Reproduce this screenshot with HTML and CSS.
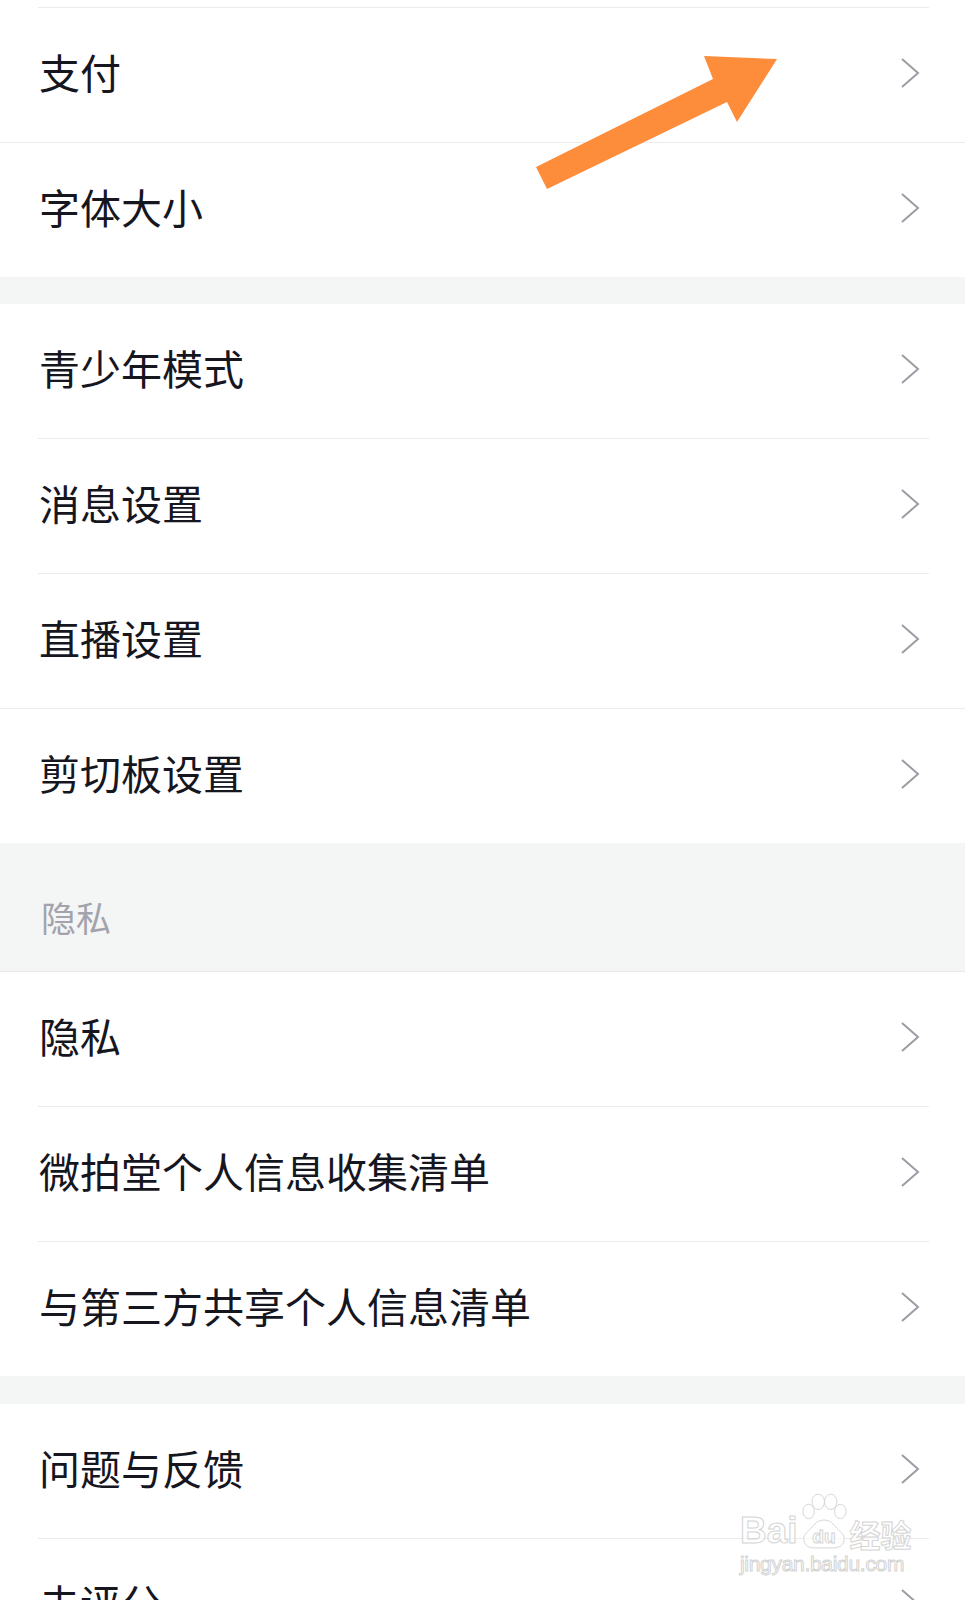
FILE: index.html
```html
<!DOCTYPE html>
<html lang="zh-CN">
<head>
  <meta charset="UTF-8" />
  <meta name="viewport" content="width=device-width, initial-scale=1.0"/>
  <title>设置</title>
  <link rel="stylesheet" href="styles.css">
</head>
<body>
  <div class="screen">
    <div class="stub"></div>

    <section class="group">
      <div class="row full"><span class="label">支付</span><svg class="chev" viewBox="0 0 20 32"><polyline points="2,2 18,16 2,30"/></svg></div>
      <div class="row"><span class="label">字体大小</span><svg class="chev" viewBox="0 0 20 32"><polyline points="2,2 18,16 2,30"/></svg></div>
    </section>

    <div class="gap"></div>

    <section class="group">
      <div class="row"><span class="label">青少年模式</span><svg class="chev" viewBox="0 0 20 32"><polyline points="2,2 18,16 2,30"/></svg></div>
      <div class="row"><span class="label">消息设置</span><svg class="chev" viewBox="0 0 20 32"><polyline points="2,2 18,16 2,30"/></svg></div>
      <div class="row full"><span class="label">直播设置</span><svg class="chev" viewBox="0 0 20 32"><polyline points="2,2 18,16 2,30"/></svg></div>
      <div class="row"><span class="label">剪切板设置</span><svg class="chev" viewBox="0 0 20 32"><polyline points="2,2 18,16 2,30"/></svg></div>
    </section>

    <div class="group-title">隐私</div>

    <section class="group">
      <div class="row"><span class="label">隐私</span><svg class="chev" viewBox="0 0 20 32"><polyline points="2,2 18,16 2,30"/></svg></div>
      <div class="row"><span class="label">微拍堂个人信息收集清单</span><svg class="chev" viewBox="0 0 20 32"><polyline points="2,2 18,16 2,30"/></svg></div>
      <div class="row"><span class="label">与第三方共享个人信息清单</span><svg class="chev" viewBox="0 0 20 32"><polyline points="2,2 18,16 2,30"/></svg></div>
    </section>

    <div class="gap gap-lg"></div>

    <section class="group">
      <div class="row"><span class="label">问题与反馈</span><svg class="chev" viewBox="0 0 20 32"><polyline points="2,2 18,16 2,30"/></svg></div>
      <div class="row"><span class="label">去评分</span><svg class="chev" viewBox="0 0 20 32"><polyline points="2,2 18,16 2,30"/></svg></div>
    </section>

    <!-- annotation arrow drawn over the list -->
    <svg class="arrow" viewBox="0 0 965 300">
      <polygon points="536,167 713,79 704,56 777,59 737,122 727,102 547,189"/>
    </svg>

    <!-- watermark -->
    <div class="wm">
      <div class="wm-logo">
        <span class="wm-bai">Bai</span>
        <svg class="paw" viewBox="0 0 50 58">
          <ellipse cx="9" cy="19" rx="6" ry="7.5"/>
          <ellipse cx="19" cy="9" rx="6.5" ry="8"/>
          <ellipse cx="32" cy="9" rx="6.5" ry="8"/>
          <ellipse cx="42" cy="19" rx="6" ry="7.5"/>
          <path d="M25 28 C16 28 13 36 7 41 C1 46 4 57 14 57 L36 57 C46 57 49 46 43 41 C37 36 34 28 25 28 Z"/>
          <text x="25" y="52" text-anchor="middle">du</text>
        </svg>
        <span class="wm-jy">经验</span>
      </div>
      <div class="wm-url">jingyan.baidu.com</div>
    </div>
  </div>
</body>
</html>
```

FILE: styles.css
```css
body {
  margin: 0;
  background: #fff;
  font-family: "Noto Sans CJK SC", "Noto Sans", sans-serif;
  color: #16161f;
}
.screen {
  position: relative;
  width: 965px;
  height: 1600px;
  overflow: hidden;
  background: #fff;
}
.stub {
  height: 8px;
  margin: 0 36px 0 38px;
  border-bottom: 1px solid #ebebeb;
  box-sizing: border-box;
}
.group { background: #fff; }
.row {
  height: 135px;
  margin: 0 36px 0 38px;
  padding: 0 9px 5px 1px;
  border-bottom: 1px solid #ebebeb;
  box-sizing: border-box;
  display: flex;
  align-items: center;
  justify-content: space-between;
}
.row.full {
  margin: 0;
  padding-left: 39px;
  padding-right: 45px;
}
.row:last-child {
  height: 134px;
  border-bottom: none;
}
.label {
  font-size: 41px;
  line-height: 1;
  margin-bottom: 2px;
}
.chev {
  width: 20px;
  height: 32px;
  fill: none;
  stroke: #9c9ca4;
  stroke-width: 2;
}
.gap {
  height: 27px;
  background: #f4f5f5;
}
.gap-lg { height: 28px; }
.group-title {
  height: 129px;
  padding: 18px 0 0 41px;
  box-sizing: border-box;
  background: #f4f5f5;
  border-bottom: 1px solid #e8e8e8;
  display: flex;
  align-items: center;
  font-size: 35px;
  color: #a3a3ab;
}
.arrow {
  position: absolute;
  left: 0;
  top: 0;
  width: 965px;
  height: 300px;
  fill: #fd8c3b;
}
.wm {
  position: absolute;
  left: 740px;
  top: 1492px;
  color: rgba(255,255,255,0.6);
  -webkit-text-stroke: 1px #d4d4d4;
  font-family: "Liberation Sans", sans-serif;
}
.wm-logo {
  display: flex;
  align-items: flex-end;
  height: 58px;
}
.wm-bai {
  font-size: 37px;
  font-weight: 700;
  line-height: 1;
  margin-bottom: 1px;
}
.paw {
  width: 48px;
  height: 58px;
  margin: 0 2px;
  fill: rgba(255,255,255,0.6);
  stroke: #d4d4d4;
  stroke-width: 1;
}
.paw text {
  font-family: "Liberation Sans", sans-serif;
  font-size: 20px;
  font-weight: 700;
}
.wm-jy {
  font-family: "Noto Sans CJK SC", sans-serif;
  font-size: 31px;
  font-weight: 700;
  line-height: 1;
  margin-bottom: 1px;
}
.wm-url {
  font-size: 21px;
  line-height: 24px;
  margin-top: 2px;
  letter-spacing: -0.3px;
}
```
